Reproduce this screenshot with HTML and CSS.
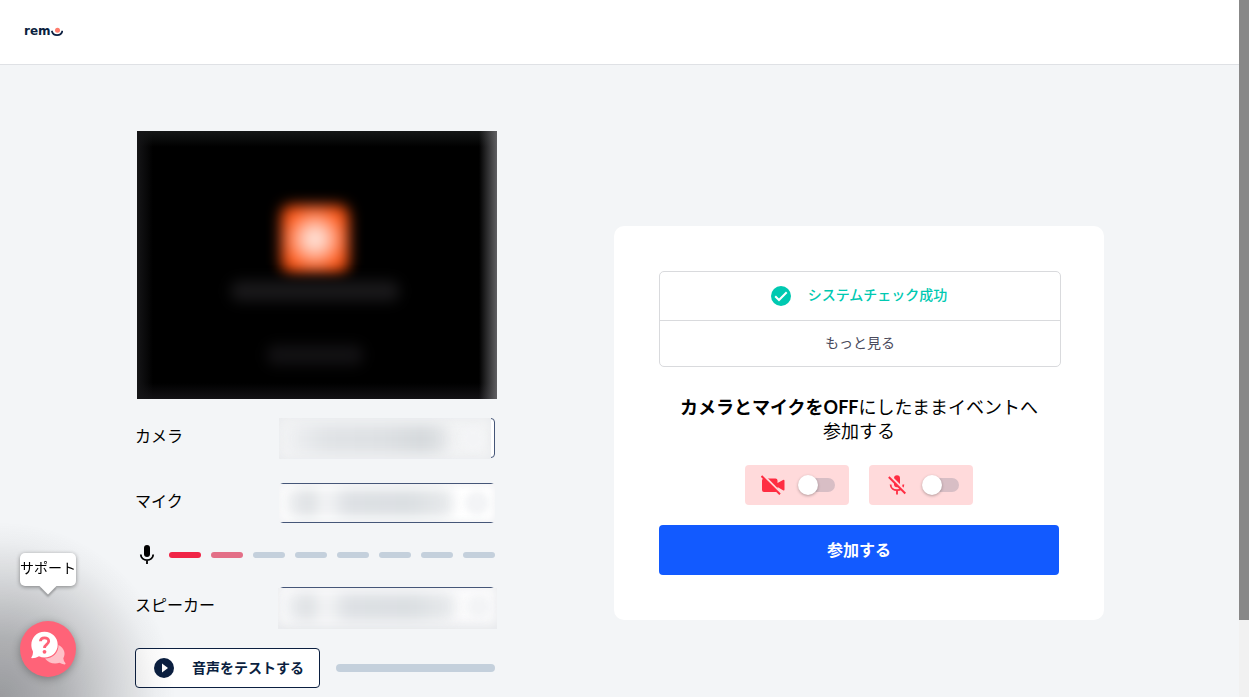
FILE: index.html
```html
<!DOCTYPE html>
<html lang="ja">
<head>
    <meta charset="UTF-8">
    <meta name="viewport" content="width=device-width, initial-scale=1.0">
    <title>Remo</title>
    <link rel="stylesheet" href="styles.css">
</head>
<body>

    <header>
        <a href="#" class="logo" aria-label="remo">
            <span>rem</span>
            <svg width="12" height="10" viewBox="0 0 12 10">
                <circle cx="6.500" cy="3.200" r="2.500" fill="#ff7b6b"/>
                <path d="M1 4.500C2.200 9.200 10 9.200 11.200 4.500" fill="none" stroke="#0b1f40" stroke-width="1.800" stroke-linecap="round"/>
            </svg>
        </a>
    </header>

    <main>
        <section class="devices">
            <div class="preview">
                <div class="preview-logo"></div>
                <div class="preview-line"></div>
                <div class="preview-line short"></div>
            </div>

            <div class="controls">
                <div class="row">
                    <label for="camera">カメラ</label>
                    <div class="select camera">
                        <select id="camera"></select>
                        <div class="mask"><i></i><b></b></div>
                    </div>
                </div>
                <div class="row">
                    <label for="mic">マイク</label>
                    <div class="select mic">
                        <select id="mic"></select>
                        <div class="mask"><i></i><b></b></div>
                    </div>
                </div>
                <div class="meter">
                    <svg width="24" height="24" viewBox="0 0 24 24">
                        <rect x="9" y="2" width="6" height="12" rx="3"/>
                        <path d="M18.200 11.500c0 3.400-2.900 5.600-6.200 5.600s-6.200-2.200-6.200-5.600M12 17v4" fill="none" stroke="#000" stroke-width="1.800"/>
                    </svg>
                    <div class="bars">
                        <span class="on"></span>
                        <span class="half"></span>
                        <span></span>
                        <span></span>
                        <span></span>
                        <span></span>
                        <span></span>
                        <span></span>
                    </div>
                </div>
                <div class="row">
                    <label for="speaker">スピーカー</label>
                    <div class="select speaker">
                        <select id="speaker"></select>
                        <div class="mask"><i></i><b></b></div>
                    </div>
                </div>
                <div class="test">
                    <button class="test-button">
                        <svg width="20" height="20" viewBox="0 0 20 20">
                            <circle cx="10" cy="10" r="10" fill="#0b1f40"/>
                            <path d="M8 5.500L14 10L8 14.500Z" fill="#fff"/>
                        </svg>
                        <span>音声をテストする</span>
                    </button>
                    <div class="test-bar"></div>
                </div>
            </div>
        </section>

        <section class="card">
            <div class="check">
                <div class="check-status">
                    <svg width="20" height="20" viewBox="0 0 20 20">
                        <circle cx="10" cy="10" r="10" fill="#00c9b1"/>
                        <path d="M4.200 10.200L8 14L15.700 6.200" fill="none" stroke="#fff" stroke-width="2"/>
                    </svg>
                    <span>システムチェック成功</span>
                </div>
                <button class="more">もっと見る</button>
            </div>

            <p class="message"><strong>カメラとマイクをOFF</strong>にしたままイベントへ<br>参加する</p>

            <div class="toggles">
                <label class="toggle">
                    <svg width="24" height="24" viewBox="0 0 24 24">
                        <path d="M3 5.500H14.500Q16.500 5.500 16.500 7.500V10L22 7Q23.500 6.400 23.500 8V16.500Q23.500 18 22 17.300L16.500 14V17Q16.500 19 14.500 19H3Q1 19 1 17V7.500Q1 5.500 3 5.500Z" fill="#ff2d42"/>
                        <path d="M1.200 1.600L20.200 21" stroke="#ffdadb" stroke-width="3"/>
                        <path d="M.5 3L19 21.300" stroke="#ff2d42" stroke-width="2"/>
                    </svg>
                    <input type="checkbox" aria-label="カメラ">
                </label>
                <label class="toggle">
                    <svg width="24" height="24" viewBox="0 0 24 24">
                        <rect x="9" y="2.300" width="6" height="12" rx="3" fill="#ff2d42"/>
                        <path d="M18.400 11.500C18.400 19 5.600 19 5.600 11.500M12 17V21.500" fill="none" stroke="#ff2d42" stroke-width="1.800"/>
                        <path d="M5 3L21.500 19.500" stroke="#ffdadb" stroke-width="2.500"/>
                        <path d="M3.800 4L20.300 20.500" stroke="#ff2d42" stroke-width="1.900"/>
                    </svg>
                    <input type="checkbox" aria-label="マイク">
                </label>
            </div>

            <button class="join">参加する</button>
        </section>
    </main>

    <div class="shade"></div>
    <div class="support">
        <div class="support-label">サポート</div>
        <button class="support-button" aria-label="サポート">
            <svg width="36" height="36" viewBox="0 0 36 36">
                <path d="M28.500 14C34.500 17 36 23 33.300 27.200Q33.500 30 35.500 32.300Q35.900 33.500 34.500 33.400Q31.500 33.200 29.500 31.800C24 34 18 31.500 15 27.500C23 27.500 28.500 22 28.500 14Z" fill="#ffc0c8"/>
                <path d="M14.500 0.800C22 .8 27.700 6.500 27.700 13.700C27.700 21 21.800 26.500 14.500 26.500Q11.500 26.500 9 25.200Q6 27.300 2 27.300Q.8 27.200 1.500 26.200Q3.300 23.800 2.900 20.300C-1.600 11.500 4 .8 14.500 .8Z" fill="#fff"/>
                <path d="M10.400 10.300C10.600 5.800 18.700 5.700 18.700 10.300C18.700 13.400 14.500 13.300 14.500 17" fill="none" stroke="#ff6378" stroke-width="2.800"/>
                <circle cx="14.500" cy="20.800" r="1.900" fill="#ff6378"/>
            </svg>
        </button>
    </div>
    <div class="scrollbar"><div class="scrollbar-thumb"></div></div>

</body>
</html>
```
FILE: styles.css
```css
* {
    box-sizing: border-box;
}
body {
    margin: 0;
    height: 100vh;
    overflow: hidden;
    padding-right: 10px;
    background: #f3f5f7;
    color: #000;
    font-family: Lato, "Noto Sans CJK JP", sans-serif;
    font-size: 16px;
}
button {
    font-family: inherit;
    cursor: pointer;
}
svg {
    flex: none;
    display: block;
}
header {
    display: flex;
    align-items: center;
    height: 65px;
    padding: 0 24px;
    background: #fff;
    border-bottom: 1px solid #dfe1e5;
}
.logo {
    display: flex;
    align-items: center;
    color: #0b1f40;
    font-family: "DejaVu Sans", sans-serif;
    font-size: 12px;
    font-weight: 700;
    line-height: 14px;
    text-decoration: none;
}
.logo span {
    padding-bottom: 2px;
}
main {
    display: flex;
    justify-content: space-between;
    align-items: center;
    gap: 24px;
    max-width: 969px;
    margin: 0 auto;
    padding-top: 66px;
}

/* devices */
.devices {
    width: 362px;
    padding-bottom: 27px;
}
.preview {
    display: flex;
    flex-direction: column;
    align-items: center;
    height: 268px;
    margin: 0 0 19px 2px;
    padding: 74px 4px 0 0;
    background: linear-gradient(to right, #151517, transparent 16px, transparent 342px, #606063),
        linear-gradient(#151717, transparent 16px, transparent 252px, #131215), #000;
}
.preview-logo {
    width: 68px;
    height: 68px;
    border-radius: 10px;
    background: radial-gradient(circle, #ffe4da 6px, #ff9a78 20px, #ff6830 28px, #f85010 36px, #d84000);
    filter: blur(7px);
}
.preview-line {
    width: 168px;
    height: 20px;
    margin-top: 8px;
    border-radius: 8px;
    background: #1a191b;
    filter: blur(7px);
}
.preview-line.short {
    width: 96px;
    height: 20px;
    margin-top: 44px;
    background: #131214;
}
.controls {
    padding-right: 2px;
}
.row {
    display: flex;
    justify-content: space-between;
    align-items: center;
    margin-bottom: 25px;
}
.row label {
    line-height: 24px;
    padding-bottom: 4px;
}
.select {
    position: relative;
    width: 60%;
    height: 40px;
}
.select select {
    display: block;
    width: 100%;
    height: 100%;
    appearance: none;
    background: #fff;
    border: 1px solid #455678;
    border-radius: 4px;
}
.mask {
    position: absolute;
    inset: 1px 0;
    display: flex;
    align-items: center;
    gap: 12px;
    padding: 0 6px;
    overflow: hidden;
    pointer-events: none;
    background: #fff;
    box-shadow: inset 0 0 10px #eeeff2;
}
.mask i {
    flex: 1;
    height: 28px;
    border-radius: 8px;
    background: linear-gradient(to right, #f2f3f5, #dde0e3 14%, #f4f5f6 24%, #dde0e4 38%, #dbdfe2 75%, #e9ebed);
    filter: blur(6px);
}
.mask b {
    width: 24px;
    height: 24px;
    border-radius: 50%;
    background: #f3f4f6;
    filter: blur(3px);
}
.camera .mask {
    inset: 0 4px -1px 0;
    background: #f3f4f5;
    box-shadow: inset 0 0 12px #e8eaed;
}
.camera .mask i {
    background: linear-gradient(to right, #f0f1f3, #e0e3e6 25%, #dde0e3 60%, #d5d9dc 85%, #e6e8ea);
}
.speaker .mask {
    inset: 1px -2px -2px -1px;
    background: #fbfbfc;
    box-shadow: inset 0 -4px 12px #e6e8eb;
}
.speaker .mask i,
.speaker .mask b {
    margin-bottom: 4px;
}
.row:has(.mic) {
    margin-bottom: 20px;
}
.meter {
    display: flex;
    align-items: center;
    gap: 10px;
    margin-bottom: 20px;
}
.bars {
    display: flex;
    flex: 1;
    gap: 10px;
}
.bars span {
    flex: 1;
    height: 6px;
    border-radius: 3px;
    background: #c4d0dc;
}
.bars .on {
    background: #f02446;
}
.bars .half {
    background: #e36f87;
}
.row:has(.speaker) {
    margin-bottom: 21px;
}
.test {
    display: flex;
    align-items: center;
    gap: 16px;
}
.test-button {
    display: flex;
    align-items: center;
    gap: 18px;
    height: 40px;
    padding: 0 15px 0 18px;
    background: #fff;
    border: 1px solid #0b1f40;
    border-radius: 4px;
    color: #0b1f40;
    font-size: 14px;
    font-weight: 700;
    white-space: nowrap;
}
.test-button span {
    padding-bottom: 2px;
}
.test-bar {
    flex: 1;
    height: 8px;
    border-radius: 4px;
    background: #c4d0dc;
}

/* join card */
.card {
    width: 490px;
    padding: 45px;
    background: #fff;
    border-radius: 10px;
}
.check {
    width: calc(100% + 2px);
    border: 1px solid #d9dadd;
    border-radius: 5px;
}
.check-status {
    display: flex;
    justify-content: center;
    align-items: center;
    gap: 17px;
    height: 49px;
    padding-right: 2px;
    border-bottom: 1px solid #d9dadd;
    color: #00c9b1;
    font-size: 14px;
    font-weight: 500;
}
.check-status span {
    padding-bottom: 4px;
}
.more {
    display: block;
    width: 100%;
    height: 45px;
    padding: 0 0 3px;
    background: none;
    border: none;
    color: #4a4a5c;
    font-size: 14px;
}
.message {
    margin: 28px 0 22px;
    font-size: 18px;
    line-height: 24px;
    text-align: center;
}
.toggles {
    display: flex;
    justify-content: center;
    gap: 20px;
    margin-bottom: 20px;
}
.toggle {
    display: flex;
    align-items: center;
    gap: 16px;
    width: 104px;
    height: 40px;
    padding: 0 14px 0 16px;
    background: #ffdadb;
    border-radius: 4px;
    cursor: pointer;
}
.toggle input {
    position: relative;
    appearance: none;
    width: 34px;
    height: 14px;
    margin: 0;
    border-radius: 7px;
    background: #d8bec5;
    cursor: pointer;
}
.toggle input::before {
    content: "";
    position: absolute;
    top: -3px;
    left: -3px;
    width: 20px;
    height: 20px;
    border-radius: 50%;
    background: #fff;
    box-shadow: 0 1px 3px rgba(0, 0, 0, 0.3);
}
.toggle input:checked::before {
    left: 17px;
}
.join {
    display: block;
    width: 100%;
    height: 50px;
    padding: 0 0 2px;
    background: #125aff;
    border: none;
    border-radius: 4px;
    color: #fff;
    font-size: 16px;
    font-weight: 700;
}

/* support widget */
.shade {
    position: fixed;
    left: 0;
    bottom: 0;
    width: 180px;
    height: 180px;
    pointer-events: none;
    background: radial-gradient(circle at bottom left, rgba(20, 20, 25, 0.4), rgba(20, 20, 25, 0.3) 60px, rgba(20, 20, 25, 0.15) 112px, rgba(20, 20, 25, 0.03) 155px, transparent 175px);
}
.support {
    position: fixed;
    left: 20px;
    bottom: 20px;
}
.support-label {
    position: relative;
    width: 56px;
    height: 33px;
    margin-bottom: 35px;
    background: #fff;
    border-radius: 5px;
    box-shadow: 0 1px 4px rgba(0, 0, 0, 0.4);
    font-size: 14px;
    line-height: 30px;
    text-align: center;
    white-space: nowrap;
}
.support-label::after {
    content: "";
    position: absolute;
    left: 22px;
    bottom: -6px;
    width: 12px;
    height: 12px;
    background: #fff;
    transform: rotate(45deg);
    box-shadow: 2px 2px 2px rgba(0, 0, 0, 0.25);
}
.support-button {
    display: flex;
    justify-content: center;
    align-items: center;
    width: 56px;
    height: 56px;
    padding: 0;
    background: #ff6378;
    border: none;
    border-radius: 50%;
    box-shadow: 0 2px 8px rgba(0, 0, 0, 0.3);
}
.scrollbar {
    position: fixed;
    top: 0;
    right: 0;
    bottom: 0;
    width: 10px;
    background: #f1f1f1;
}
.scrollbar-thumb {
    height: 89%;
    background: #888;
}
```
